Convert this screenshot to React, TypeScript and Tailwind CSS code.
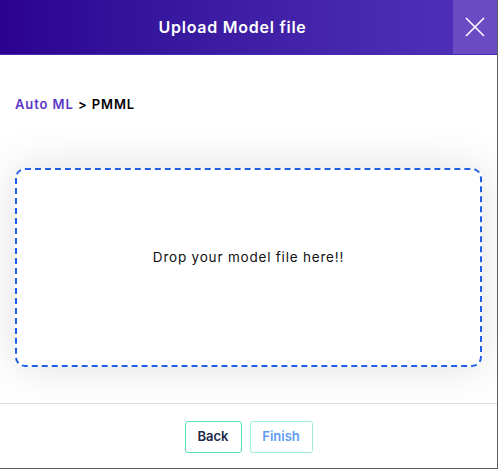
import React from 'react';

const App: React.FC = () => {
  return (
    <div
      className="w-[498px] h-[469px] bg-white flex flex-col overflow-hidden border-r border-b border-[#5c5c5c]"
      style={{ fontFamily: 'Inter, "Noto Sans", sans-serif' }}
    >
      {/* Header */}
      <div className="h-[55px] shrink-0 flex bg-gradient-to-r from-[#2b0290] to-[#5232bb] border-b border-[#4a2cb0]">
        <div className="flex-1 flex items-center justify-center pl-[12px]">
          <h1 className="text-white text-[16px] font-semibold tracking-[0.75px]">Upload Model file</h1>
        </div>
        <button className="w-[44px] h-full bg-[#6a4bc4] flex items-center justify-center">
          <svg width="20" height="20" viewBox="0 0 20 20" fill="none" stroke="white" strokeWidth="1.6">
            <path d="M1 1L19 19M19 1L1 19" />
          </svg>
        </button>
      </div>

      {/* Body */}
      <div className="flex-1 flex flex-col px-[15px]">
        <div className="pt-[40px] text-[13px] font-semibold text-black tracking-[0.9px]">
          <span className="text-[#5a37c6]">Auto ML</span> &gt; PMML
        </div>
        <div className="mt-[53px] h-[199px] rounded-[10px] bg-white shadow-[0_0_45px_rgba(0,0,0,0.13)] border-2 border-dashed border-[#1f5fe6] flex items-center justify-center pb-[19px]">
          <span className="text-[13.5px] text-[#111] tracking-[0.8px]">Drop your model file here!!</span>
        </div>
      </div>

      {/* Footer */}
      <div className="h-[65px] shrink-0 border-t border-[#dcdcdc] flex items-center justify-center gap-[8px] pt-[1px]">
        <button className="h-[32px] w-[57px] rounded-[3px] border border-[#55e3b8] text-[13px] font-semibold text-[#1b2a47] bg-white">
          Back
        </button>
        <button className="h-[32px] w-[63px] rounded-[3px] border border-[#9ff0d6] text-[13px] font-semibold text-[#5d9cf2] bg-white">
          Finish
        </button>
      </div>
    </div>
  );
};

export default App;
